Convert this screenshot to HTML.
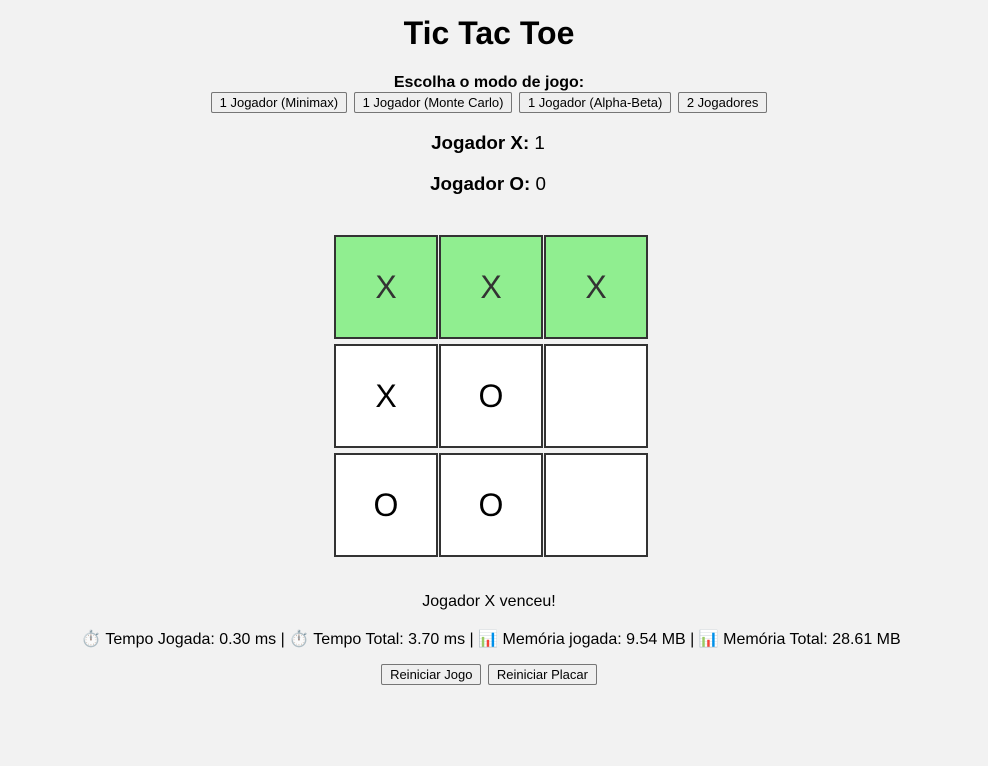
<!DOCTYPE html>
<html><head><meta charset="utf-8"><style>
body{margin:0;background:#f2f2f2;font-family:"Liberation Sans",Arial,sans-serif;color:#000;width:988px;height:766px;position:relative;overflow:hidden}
.c{position:absolute;left:0;width:988px;text-align:center;white-space:nowrap}
h1{margin:0;font-size:32px;font-weight:bold}
button{font-family:"Liberation Sans",Arial,sans-serif;font-size:13px;background:#efefef;border:1px solid #767676;border-radius:2px;padding:1px 8px;height:21px;margin:0 1px;color:#000}
.cell{position:absolute;width:100px;height:100px;border:2px solid #333;background:#fff;font-size:32px;line-height:100px;text-align:center;color:#000}
.g{background:#90ee90;color:#333}
</style></head><body>
<div class="c" style="top:15px;left:-5px"><h1>Tic Tac Toe</h1></div>
<div class="c" style="top:74px;font-size:16px;font-weight:bold;left:-5px">Escolha o modo de jogo:</div>
<div class="c" style="top:92px;left:-5px"><button>1 Jogador (Minimax)</button> <button>1 Jogador (Monte Carlo)</button> <button>1 Jogador (Alpha-Beta)</button> <button>2 Jogadores</button></div>
<div class="c" style="top:132px;font-size:18.8px;left:-6px"><b>Jogador X:</b> 1</div>
<div class="c" style="top:173px;font-size:18.8px;left:-6px"><b>Jogador O:</b> 0</div>
<div class="cell g" style="left:334px;top:235px">X</div>
<div class="cell g" style="left:439px;top:235px">X</div>
<div class="cell g" style="left:544px;top:235px">X</div>
<div class="cell" style="left:334px;top:344px">X</div>
<div class="cell" style="left:439px;top:344px">O</div>
<div class="cell" style="left:544px;top:344px"></div>
<div class="cell" style="left:334px;top:453px">O</div>
<div class="cell" style="left:439px;top:453px">O</div>
<div class="cell" style="left:544px;top:453px"></div>
<div class="c" style="top:593px;font-size:16px;left:-5px">Jogador X venceu!</div>
<div class="c" style="top:629px;font-size:16px;left:-3px">⏱️ Tempo Jogada: 0.30 ms | ⏱️ Tempo Total: 3.70 ms | 📊 Memória jogada: 9.54 MB | 📊 Memória Total: 28.61 MB</div>
<div class="c" style="top:664px;left:-5px"><button>Reiniciar Jogo</button> <button>Reiniciar Placar</button></div>
</body></html>
